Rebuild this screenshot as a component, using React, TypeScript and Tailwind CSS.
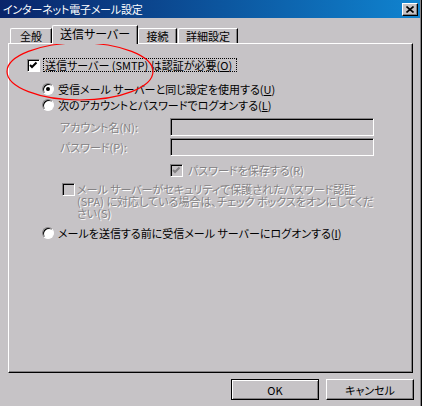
const disabled = "text-[#848284] [text-shadow:1px_1px_0_#ffffff]";

function CheckBox({ checked, off }: { checked?: boolean; off?: boolean }) {
  return (
    <div
      className={
        off
          ? "w-[13px] h-[13px] shrink-0 bg-[#c6c3c6] border border-t-[#848284] border-l-[#848284] border-r-white border-b-white shadow-[inset_1px_1px_0_#000]"
          : "w-[13px] h-[13px] shrink-0 bg-white border border-t-[#848284] border-l-[#848284] border-r-white border-b-white shadow-[inset_1px_1px_0_#000]"
      }
    >
      {checked && (
        <svg width="11" height="11" viewBox="0 0 11 11">
          <path
            d="M2 5 L4 7 L8.5 2.5"
            fill="none"
            stroke={off ? "#848284" : "#000"}
            strokeWidth="2"
          />
        </svg>
      )}
    </div>
  );
}

function Radio({ on }: { on?: boolean }) {
  return (
    <div className="w-[12px] h-[12px] shrink-0 rounded-full bg-white border border-t-[#848284] border-l-[#848284] border-r-white border-b-white shadow-[inset_1px_1px_0_#000] flex items-center justify-center">
      {on && <div className="w-[4px] h-[4px] rounded-full bg-black" />}
    </div>
  );
}

function Field() {
  return (
    <div className="w-[204px] h-[18px] bg-[#c6c3c6] border border-t-[#848284] border-l-[#848284] border-r-white border-b-white shadow-[inset_1px_1px_0_#000]" />
  );
}

export default function App() {
  return (
    <div className="relative w-[422px] h-[406px] overflow-hidden bg-[#c6c3c6] text-black text-[11px] leading-[14px] whitespace-nowrap font-['Noto_Sans_CJK_JP','Noto_Sans',sans-serif] [font-feature-settings:'palt']">
      <div className="flex h-full">
        <div className="flex-1 flex flex-col">
          {/* title bar */}
          <div className="h-[18px] flex items-center justify-between pl-[3px] pr-[2px] bg-gradient-to-r from-[#0a246a] to-[#1084d0]">
            <span className="text-white text-[11px] tracking-[-0.2px]">インターネット電子メール設定</span>
            <div className="w-[16px] h-[13px] mt-[1px] bg-[#c6c3c6] border-t border-l border-white border-r border-b border-r-black border-b-black shadow-[inset_-1px_-1px_0_#848284] flex items-center justify-center">
              <svg width="8" height="7" viewBox="0 0 8 7">
                <path d="M0.5 0.5 L7.5 6.5 M7.5 0.5 L0.5 6.5" stroke="#000" strokeWidth="1.6" />
              </svg>
            </div>
          </div>

          {/* tabs */}
          <div className="flex items-end h-[25px] pl-[10px]">
            <div className="w-[42px] h-[15px] border-t border-l border-white border-r border-r-black rounded-tl-[2px] shadow-[inset_-1px_0_0_#848284] flex items-center justify-center">
              全般
            </div>
            <div className="relative z-10 w-[86px] h-[19px] -mb-px bg-[#c6c3c6] border-t border-l border-white border-r border-r-black rounded-tl-[2px] shadow-[inset_-1px_0_0_#848284] flex justify-center pt-[1px] text-[12px]">
              送信サーバー
            </div>
            <div className="w-[39px] h-[15px] border-t border-l border-white border-r border-r-black rounded-tl-[2px] shadow-[inset_-1px_0_0_#848284] flex items-center justify-center">
              接続
            </div>
            <div className="ml-px w-[60px] h-[15px] border-t border-l border-white border-r border-r-black rounded-tl-[2px] shadow-[inset_-1px_0_0_#848284] flex items-center justify-center">
              詳細設定
            </div>
          </div>

          {/* panel */}
          <div className="ml-[8px] w-[405px] h-[330px] border-t border-l border-white border-r border-b border-r-black border-b-black shadow-[inset_-1px_-1px_0_#848284] flex flex-col">
            <div className="flex items-center h-[14px] mt-[14px] pl-[18px]">
              <CheckBox checked />
              <div className="ml-[3px] h-[14px] min-w-[194px] border border-dotted border-black flex items-center px-[1px]">
                送信サーバー (SMTP) は認証が必要(<u>O</u>)
              </div>
            </div>

            <div className="flex items-center h-[16px] mt-[9px] pl-[33px] gap-[4px]">
              <Radio on />
              <span>受信メール サーバーと同じ設定を使用する(<u>U</u>)</span>
            </div>
            <div className="flex items-center h-[16px] pl-[33px] gap-[4px]">
              <Radio />
              <span>次のアカウントとパスワードでログオンする(<u>L</u>)</span>
            </div>

            <div className="flex items-center mt-[5px] pl-[51px]">
              <span className={"w-[110px] " + disabled}>アカウント名(N):</span>
              <Field />
            </div>
            <div className="flex items-center mt-[2px] pl-[51px]">
              <span className={"w-[110px] " + disabled}>パスワード(P):</span>
              <Field />
            </div>

            <div className="flex items-center mt-[7px] pl-[161px] gap-[5px]">
              <CheckBox checked off />
              <span className={disabled}>パスワードを保存する(R)</span>
            </div>

            <div className="flex items-start mt-[6px] pl-[53px] gap-[2px]">
              <CheckBox off />
              <div className={"leading-[12px] " + disabled}>
                メール サーバーがセキュリティで保護されたパスワード認証
                <br />
                (SPA) に対応している場合は、チェック ボックスをオンにしてくだ
                <br />
                さい(S)
              </div>
            </div>

            <div className="flex items-center h-[16px] mt-[6px] pl-[33px] gap-[4px]">
              <Radio />
              <span>メールを送信する前に受信メール サーバーにログオンする(<u>I</u>)</span>
            </div>
          </div>

          {/* buttons */}
          <div className="flex justify-end gap-[7px] pr-[6px] mt-[6px]">
            <button className="w-[88px] h-[21px] border border-black shadow-[inset_1px_1px_0_#fff,inset_-1px_-1px_0_#848284] flex items-center justify-center">
              OK
            </button>
            <button className="w-[88px] h-[21px] border-t border-l border-white border-r border-b border-r-black border-b-black shadow-[inset_-1px_-1px_0_#848284] flex items-center justify-center">
              キャンセル
            </button>
          </div>
        </div>
        <div className="w-px bg-[#848284]" />
        <div className="w-px bg-black" />
      </div>

      {/* red annotation */}
      <svg className="absolute left-0 top-0 pointer-events-none" width="422" height="406">
        <ellipse cx="80" cy="71.5" rx="73" ry="28.5" fill="none" stroke="#ff0000" strokeWidth="1.2" />
      </svg>
    </div>
  );
}
